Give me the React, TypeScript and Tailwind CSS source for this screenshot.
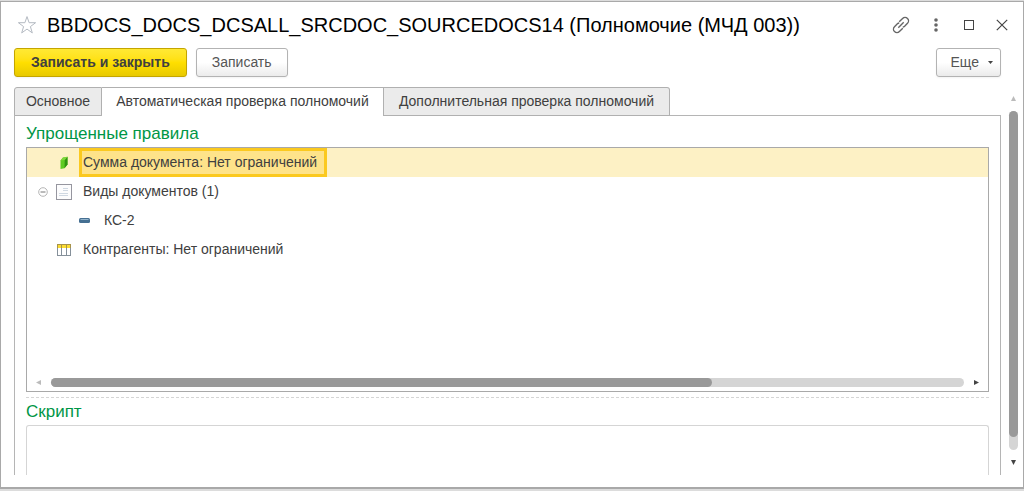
import { useState, type ReactNode } from "react";

const tabs = [
  { label: "Основное", width: "w-[88px]" },
  { label: "Автоматическая проверка полномочий", width: "w-[282px]" },
  { label: "Дополнительная проверка полномочий", width: "w-[286px]" },
];

function StarIcon() {
  return (
    <svg width="20" height="20" viewBox="0 0 20 20" fill="none" stroke="#b4bac2">
      <path d="M10 1.6 12.1 7.7H18.6L13.4 11.6 15.3 17.9 10 14.1 4.7 17.9 6.6 11.6 1.4 7.7H7.9Z" />
    </svg>
  );
}

function LinkIcon() {
  return (
    <svg width="18" height="18" viewBox="0 0 18 18" fill="none" stroke="#666" strokeWidth="1.4">
      <path d="M7.2 5.8 10.6 2.4a3.4 3.4 0 0 1 4.9 4.9L12.6 10.2a3 3 0 0 1-1.8.8" />
      <path d="M10.8 12.2 7.4 15.6a3.4 3.4 0 0 1-4.9-4.9L5.4 7.8a3 3 0 0 1 1.8-.8" />
      <path d="M6.3 11.7 11.7 6.3" />
    </svg>
  );
}

function MoreIcon() {
  return (
    <svg width="4" height="14" viewBox="0 0 4 14" fill="#666">
      <circle cx="2" cy="2" r="1.8" />
      <circle cx="2" cy="7" r="1.8" />
      <circle cx="2" cy="12" r="1.8" />
    </svg>
  );
}

function MaximizeIcon() {
  return (
    <svg width="10" height="10" viewBox="0 0 10 10" fill="none" stroke="#444">
      <rect x="0.5" y="0.5" width="9" height="9" />
    </svg>
  );
}

function CloseIcon() {
  return (
    <svg width="12" height="12" viewBox="0 0 12 12" stroke="#444" strokeWidth="1.2">
      <path d="M0.8 0.8 11.2 11.2M11.2 0.8 0.8 11.2" />
    </svg>
  );
}

function AmountIcon() {
  return (
    <svg width="8" height="14" viewBox="0 0 8 14">
      <path d="M0.5 4.5 3 1.5 7.5 0.8V8.5L4.5 12.3 0.5 13Z" fill="#5fcb22" />
      <path d="M4.8 3.5 7.5 0.8V8.5L4.5 12.3Z" fill="#2f9410" />
      <path d="M0.5 4.5 3 1.5 7.5 0.8 4.8 4Z" fill="#7ed63c" />
    </svg>
  );
}

function DocumentIcon() {
  return (
    <svg width="16" height="16" viewBox="0 0 16 16">
      <rect x="0.5" y="0.5" width="15" height="15" fill="#fcfcfd" stroke="#96969f" />
      <path d="M7 4.5H12M7 6.5H12M3 9.5H12M3 11.5H12" stroke="#cfd8e2" />
    </svg>
  );
}

function ItemIcon() {
  return (
    <svg width="11" height="5" viewBox="0 0 11 5">
      <rect width="11" height="5" rx="1.5" fill="#456f92" />
      <path d="M1.5 1.5H9.5" stroke="#94b4cc" />
    </svg>
  );
}

function TableIcon() {
  return (
    <svg width="14" height="12" viewBox="0 0 14 12">
      <rect x="0.5" y="0.5" width="13" height="11" fill="#fff" stroke="#85909a" />
      <path d="M0 0H14V4H0Z" fill="#a8934a" />
      <path d="M1 1H4V4H1ZM5 1H9V4H5ZM10 1H13V4H10Z" fill="#fbdc32" />
      <path d="M4.5 4V12M9.5 4V12" stroke="#85909a" />
    </svg>
  );
}

function CollapseIcon() {
  return (
    <svg width="10" height="10" viewBox="0 0 10 10" fill="none">
      <circle cx="5" cy="5" r="4.3" stroke="#b5b5b5" />
      <path d="M2.5 5H7.5" stroke="#777" />
    </svg>
  );
}

function Arrow({ d, color }: { d: string; color: string }) {
  return (
    <svg className="shrink-0" width="5" height="5" viewBox="0 0 5 5" fill={color}>
      <path d={d} />
    </svg>
  );
}

type RowProps = {
  icon: ReactNode;
  label: string;
  nested?: boolean;
  selected?: boolean;
  open?: boolean;
  onSelect: () => void;
  onToggle?: () => void;
};

function TreeRow({ icon, label, nested, selected, open, onSelect, onToggle }: RowProps) {
  return (
    <li
      role="treeitem"
      aria-selected={!!selected}
      onClick={onSelect}
      className={`flex h-[29px] cursor-default items-center ${nested ? "pl-[47px]" : "pl-[11px]"} ${
        selected ? "bg-[#fdf1c5]" : ""
      }`}
    >
      {!nested && (
        <span className="flex w-4 shrink-0">
          {onToggle && (
            <button type="button" aria-label={label} aria-expanded={open} onClick={onToggle}>
              <CollapseIcon />
            </button>
          )}
        </span>
      )}
      <span className="flex w-5 shrink-0 justify-center">{icon}</span>
      <span
        className={`flex h-full items-center border-[3px] pr-[7px] pb-px pl-px whitespace-nowrap ${
          nested ? "ml-[6px]" : "ml-[5px]"
        } ${selected ? "border-[#fbc91f] bg-[#fee38a]" : "border-transparent"}`}
      >
        {label}
      </span>
    </li>
  );
}

export default function App() {
  const [tab, setTab] = useState(1);
  const [row, setRow] = useState("amount");
  const [open, setOpen] = useState(true);

  return (
    <div className="flex h-screen flex-col bg-[#dcdcdc] pt-px pb-[2px] font-['Liberation_Sans',Arial,sans-serif] text-[14px] leading-5 text-[#404040]">
      <main className="flex min-h-0 flex-1 flex-col border border-b-2 border-[#a9a9a9] bg-white pb-3">
        {/* Title bar */}
        <header className="flex h-[46px] shrink-0 items-center pr-[15px] pb-px pl-4">
          <button type="button" aria-label="Избранное" className="mr-[10px]">
            <StarIcon />
          </button>
          <h1 className="flex-1 truncate text-[20px] leading-7 text-black">
            BBDOCS_DOCS_DCSALL_SRCDOC_SOURCEDOCS14 (Полномочие (МЧД 003))
          </h1>
          <div className="flex items-center">
            <button type="button" aria-label="Ссылка">
              <LinkIcon />
            </button>
            <button type="button" aria-label="Меню" className="ml-6">
              <MoreIcon />
            </button>
            <button type="button" aria-label="Развернуть" className="ml-[26px]">
              <MaximizeIcon />
            </button>
            <button type="button" aria-label="Закрыть" className="ml-[22px]">
              <CloseIcon />
            </button>
          </div>
        </header>

        {/* Commands */}
        <div className="flex shrink-0 items-center gap-[9px] pr-[22px] pl-[13px]">
          <button
            type="button"
            className="h-[29px] rounded-[3px] border border-[#c4a500] bg-linear-to-b from-[#ffe934] via-[#ffdf00] to-[#e8c900] px-4 pb-px font-bold shadow-xs"
          >
            Записать и закрыть
          </button>
          <button
            type="button"
            className="h-[29px] rounded-[3px] border border-[#b3b3b3] bg-linear-to-b from-white from-50% to-[#ebebeb] px-[15px] pb-px text-[#555] shadow-xs"
          >
            Записать
          </button>
          <button
            type="button"
            className="ml-auto flex h-[29px] items-center gap-[9px] rounded-[3px] border border-[#b3b3b3] bg-linear-to-b from-white from-50% to-[#ebebeb] pr-[7px] pb-px pl-[14px] text-[#555] shadow-xs"
          >
            Еще
            <Arrow d="M0 1H5L2.5 4Z" color="#444" />
          </button>
        </div>

        <div className="mt-[10px] flex min-h-0 flex-1 pr-[5px] pl-[13px]">
          <div className="flex min-w-0 flex-1 flex-col">
            <div role="tablist" className="flex shrink-0">
              {tabs.map(({ label, width }, i) => (
                <button
                  key={label}
                  type="button"
                  role="tab"
                  aria-selected={tab === i}
                  onClick={() => setTab(i)}
                  className={`relative h-[29px] border-t border-r border-[#b0b0b0] whitespace-nowrap first:rounded-tl-[3px] first:border-l last:rounded-tr-[3px] ${width} ${
                    tab === i ? "-mb-px bg-white pb-[2px]" : "border-b bg-[#ebebeb] pb-px"
                  }`}
                >
                  {label}
                </button>
              ))}
            </div>

            <section className="-mt-px flex min-h-0 flex-1 flex-col overflow-hidden border border-b-0 border-[#b5b5b5] px-[11px] pt-[6px]">
              <h2 className="shrink-0 pb-px text-[17px] leading-6 text-[#009646]">Упрощенные правила</h2>
              <div className="flex h-[245px] shrink-0 flex-col border border-[#a9a9a9]">
                <ul role="tree" className="flex-1">
                  <TreeRow
                    icon={<AmountIcon />}
                    label="Сумма документа: Нет ограничений"
                    selected={row === "amount"}
                    onSelect={() => setRow("amount")}
                  />
                  <TreeRow
                    icon={<DocumentIcon />}
                    label="Виды документов (1)"
                    selected={row === "kinds"}
                    open={open}
                    onSelect={() => setRow("kinds")}
                    onToggle={() => setOpen(!open)}
                  />
                  {open && (
                    <TreeRow
                      icon={<ItemIcon />}
                      label="КС-2"
                      nested
                      selected={row === "ks2"}
                      onSelect={() => setRow("ks2")}
                    />
                  )}
                  <TreeRow
                    icon={<TableIcon />}
                    label="Контрагенты: Нет ограничений"
                    selected={row === "partners"}
                    onSelect={() => setRow("partners")}
                  />
                </ul>
                <div className="flex h-[17px] shrink-0 items-center gap-[10px] px-[9px]">
                  <Arrow d="M5 0V5L0 2.5Z" color="#bbb" />
                  <div className="h-[9px] flex-1 rounded-full bg-[#d5d5d5]">
                    <div className="h-full w-[72.4%] rounded-full bg-[#999]" />
                  </div>
                  <Arrow d="M0 0V5L5 2.5Z" color="#444" />
                </div>
              </div>
              <div className="mt-[5px] border-t border-dashed border-[#d5d5d5]" />
              <label htmlFor="script" className="mt-[2px] shrink-0 text-[17px] leading-6 text-[#009646]">
                Скрипт
              </label>
              <textarea
                id="script"
                className="mt-px min-h-0 flex-1 resize-none rounded-t-[3px] border border-b-0 border-[#d5d5d5] p-2 outline-none"
              />
            </section>
          </div>

          {/* Vertical scrollbar */}
          <div className="ml-2 flex w-[9px] shrink-0 flex-col items-center gap-[10px] pt-[9px] pb-[10px]">
            <Arrow d="M0 5H5L2.5 0Z" color="#bbb" />
            <div className="w-[9px] flex-1 rounded-full bg-[#d5d5d5]">
              <div className="h-[96.2%] w-full rounded-full bg-[#999]" />
            </div>
            <Arrow d="M0 0H5L2.5 5Z" color="#444" />
          </div>
        </div>
      </main>
    </div>
  );
}
